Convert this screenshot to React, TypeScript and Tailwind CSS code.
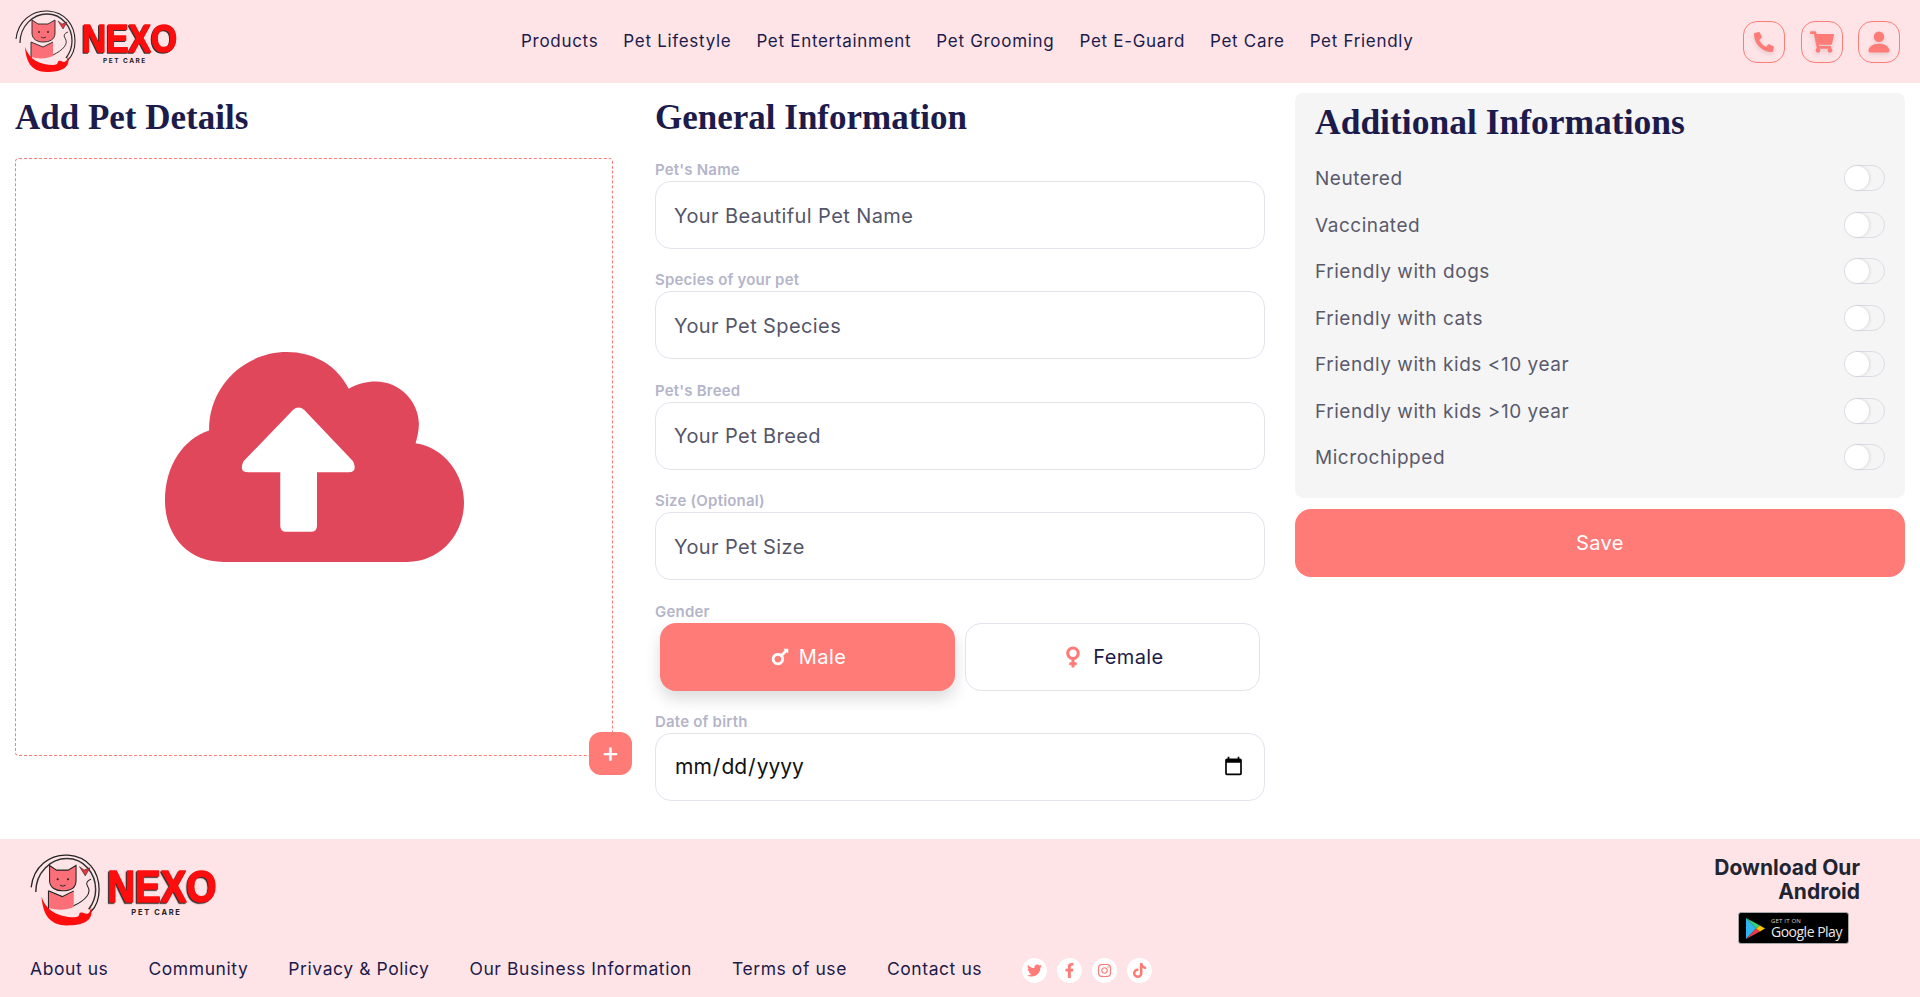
import { FaFacebookF, FaInstagram, FaMars, FaPhoneAlt, FaShoppingCart, FaTiktok, FaTwitter, FaVenus } from "react-icons/fa";
import { BsPersonFill } from "react-icons/bs";

const navLinks = ["Products", "Pet Lifestyle", "Pet Entertainment", "Pet Grooming", "Pet E-Guard", "Pet Care", "Pet Friendly"];
const footerLinks = ["About us", "Community", "Privacy & Policy", "Our Business Information", "Terms of use", "Contact us"];
const fields = [
    { label: "Pet's Name", placeholder: "Your Beautiful Pet Name" },
    { label: "Species of your pet", placeholder: "Your Pet Species" },
    { label: "Pet's Breed", placeholder: "Your Pet Breed" },
    { label: "Size (Optional)", placeholder: "Your Pet Size" },
];
const extras = [
    "Neutered",
    "Vaccinated",
    "Friendly with dogs",
    "Friendly with cats",
    "Friendly with kids <10 year",
    "Friendly with kids >10 year",
    "Microchipped",
];

function Logo({ width }: { width: number }) {
    return (
        <svg width={width} viewBox="0 0 165 64" className="block shrink-0 overflow-visible">
            {/* ring */}
            <path d="M1 29 C3 11 17 0 33 1 C50 2 60 15 60 31 C60 40 57 46 53 50" fill="none" stroke="#222" strokeWidth="1.1" />
            <path d="M5 33 C5 16 18 4 32 4 C47 4 57 17 57 31 C57 39 54 44 51 48" fill="none" stroke="#333" strokeWidth="1.3" />
            {/* cat */}
            <path d="M17 10 L23 14 L33 14 L40 10 L40 23 C40 30 34 32 28 32 C22 32 17 29 17 23 Z" fill="#fb6f78" stroke="#222" strokeWidth="0.9" />
            <circle cx="24" cy="22" r="0.9" fill="#222" />
            <circle cx="33" cy="22" r="0.9" fill="#222" />
            <path d="M26 27 Q28.500 29 31 27" fill="none" stroke="#222" strokeWidth="0.8" />
            <path d="M16 32 L16 47 C24 49 31 49 38 46 L38 32 L28 37 Z" fill="#fb6f78" />
            <path d="M16 32 L16 48 M16 32 L28 37 L38 32" fill="none" stroke="#222" strokeWidth="0.9" />
            <path d="M38 45 C48 40 54 34 50 28 C48 25 50 23 53 22" fill="none" stroke="#222" strokeWidth="0.9" />
            <path d="M43 11 L47 14 L52 12 L48 19 Z" fill="#ef3340" stroke="#222" strokeWidth="0.5" />
            {/* hand */}
            <path d="M10 37 C11 50 15 62 32 62 C46 62 56 58 53 46 C52 52 50 53 46 51 C40 50 46 55 38 55 C26 55 14 50 10 37 Z" fill="#fd0d0d" />
            {/* wordmark */}
            <text
                x="67"
                y="42"
                fontFamily="Liberation Sans, sans-serif"
                fontWeight="700"
                fontSize="38"
                fill="#fd0d0d"
                stroke="#fd0d0d"
                strokeWidth="1.5"
                strokeLinejoin="round"
                textLength="95"
                lengthAdjust="spacingAndGlyphs"
                style={{ filter: "drop-shadow(-1px 1px 0 #333)" }}
            >
                NEXO
            </text>
            <text x="88" y="53" fontFamily="Inter, sans-serif" fontWeight="700" fontSize="6.500" letterSpacing="1.500" fill="#222">PET CARE</text>
        </svg>
    );
}

function UploadCloud() {
    return (
        <svg width="299" height="210" viewBox="75 65 895 628">
            <path
                d="M250 693 C140 693 75 610 75 510 C75 405 130 325 207 300 C205 170 310 65 440 65 C520 65 590 105 625 175 C650 160 680 153 705 153 C780 153 835 215 835 280 C835 300 830 320 825 338 C910 350 970 430 970 515 C970 610 900 693 800 693 Z"
                fill="#e0475b"
            />
            <path
                d="M458 238 Q475 224 492 238 L638 392 Q652 425 625 425 L530 425 L530 585 Q530 603 512 603 L438 603 Q420 603 420 585 L420 425 L325 425 Q295 425 310 392 Z"
                fill="#fff"
            />
        </svg>
    );
}

function HeaderButton({ children }: { children: React.ReactNode }) {
    return (
        <div className="flex h-[42px] w-[42px] items-center justify-center rounded-[14px] border border-[#ff7b77] text-[#ff7b77] [&>svg]:drop-shadow-[0_2px_2px_rgba(0,0,0,0.12)]">
            {children}
        </div>
    );
}

function GooglePlayBadge() {
    return (
        <div className="flex h-[32px] w-[111px] items-center gap-[6px] rounded-[3px] border border-[#a6a6a6] bg-black pl-[7px]">
            <svg width="19" height="21" viewBox="0 0 19 21">
                <path d="M0 0 L10 10.500 L0 21 Z" fill="#2fb5f0" />
                <path d="M0 0 L14 7.500 L10 10.500 Z" fill="#35d07f" />
                <path d="M0 21 L14 13.500 L10 10.500 Z" fill="#f0394a" />
                <path d="M14 7.500 L19 10.500 L14 13.500 L10 10.500 Z" fill="#fdc500" />
            </svg>
            <div className="flex flex-col font-['Open_Sans',sans-serif] text-white">
                <span className="text-[6px] leading-[7px] tracking-[0.2px] text-[#d5d5d5]">GET IT ON</span>
                <span className="text-[14px] leading-[14px] tracking-[-0.5px] text-[#e8e8e8]">Google Play</span>
            </div>
        </div>
    );
}

export default function App() {
    return (
        <div className="min-h-[997px] bg-white font-['Inter',sans-serif] text-[#1c1b4b]">
            {/* Header */}
            <header className="flex h-[83px] items-center bg-[#ffe4e7] pl-[15px] pr-[20px]">
                <Logo width={165} />
                <nav className="ml-[341px] flex items-center gap-[25px] text-[17px] tracking-[0.7px]">
                    {navLinks.map((item) => (
                        <span key={item} className="whitespace-nowrap">{item}</span>
                    ))}
                </nav>
                <div className="ml-auto flex items-center gap-[15.500px]">
                    <HeaderButton><FaPhoneAlt size={20} /></HeaderButton>
                    <HeaderButton><FaShoppingCart size={24} /></HeaderButton>
                    <HeaderButton><BsPersonFill size={28} /></HeaderButton>
                </div>
            </header>

            <main className="grid h-[756px] grid-cols-[610px_610px_610px] gap-x-[30px] px-[15px] pt-[10px]">
                {/* Upload */}
                <section>
                    <h2 className="h-[48px] pt-[1px] font-['Liberation_Serif',serif] text-[35px] font-bold leading-[48px]">Add Pet Details</h2>
                    <div className="relative mt-[17px] flex h-[598px] w-[598px] items-center justify-center rounded-[4px] border border-dashed border-[#ff7b77]">
                        <UploadCloud />
                        <button className="absolute -bottom-[20px] -right-[20px] flex h-[43px] w-[43px] items-center justify-center rounded-[12px] bg-[#ff7b77] pb-[3px] text-[28px] leading-none text-white">
                            +
                        </button>
                    </div>
                </section>

                {/* General information */}
                <section>
                    <h2 className="mb-[17px] h-[48px] pt-[1px] font-['Liberation_Serif',serif] text-[35px] font-bold leading-[48px]">General Information</h2>
                    {fields.map((field) => (
                        <div key={field.label} className="mb-[19.400px]">
                            <label className="mb-[2px] block h-[21px] pt-[1px] text-[15px] font-semibold leading-[21px] tracking-[0.2px] text-[#b5b5c9]">{field.label}</label>
                            <input
                                placeholder={field.placeholder}
                                className="h-[68px] w-full rounded-[16px] border border-[#e3e3ee] bg-white px-[18px] pt-[1px] text-[20px] tracking-[0.4px] outline-none placeholder:text-[#55556a]"
                            />
                        </div>
                    ))}
                    <div className="mb-[19.400px]">
                        <label className="mb-[2px] block h-[21px] pt-[1px] text-[15px] font-semibold leading-[21px] tracking-[0.2px] text-[#b5b5c9]">Gender</label>
                        <div className="grid grid-cols-2 gap-[10px] px-[5px]">
                            <button className="flex h-[68px] items-center justify-center gap-[8px] rounded-[16px] bg-[#ff7b77] text-[20px] tracking-[0.4px] text-white shadow-[0_8px_16px_rgba(0,0,0,0.14)]">
                                <FaMars size={22} />
                                Male
                            </button>
                            <button className="flex h-[68px] items-center justify-center gap-[8px] rounded-[16px] border border-[#e3e3ee] bg-white text-[20px] tracking-[0.4px]">
                                <FaVenus size={24} className="text-[#ff7b77]" />
                                Female
                            </button>
                        </div>
                    </div>
                    <div>
                        <label className="mb-[2px] block h-[21px] pt-[1px] text-[15px] font-semibold leading-[21px] tracking-[0.2px] text-[#b5b5c9]">Date of birth</label>
                        <input
                            type="date"
                            className="h-[68px] w-full rounded-[16px] border border-[#e3e3ee] bg-white px-[18px] text-[21px] text-[#111] outline-none"
                        />
                    </div>
                </section>

                {/* Additional informations */}
                <section>
                    <div className="h-[405px] rounded-[8px] bg-[#f5f5f5] px-[20px] pt-[5px]">
                        <h2 className="mb-[9px] h-[48px] font-['Liberation_Serif',serif] text-[35.500px] font-bold leading-[48px]">Additional Informations</h2>
                        {extras.map((item) => (
                            <div key={item} className="flex h-[46.500px] items-center justify-between">
                                <span className="pt-[2px] text-[19px] tracking-[0.55px] text-[#5a5a6c]">{item}</span>
                                <span className="flex h-[26px] w-[41px] items-center rounded-full border border-[#dcdce8]">
                                    <span className="h-[24px] w-[24px] rounded-full bg-white shadow-[1px_0_3px_rgba(0,0,0,0.12)]" />
                                </span>
                            </div>
                        ))}
                    </div>
                    <button className="mt-[11px] h-[68px] w-full rounded-[16px] bg-[#ff7b77] text-[20px] tracking-[0.4px] text-white">Save</button>
                </section>
            </main>

            {/* Footer */}
            <footer className="flex h-[158px] justify-between bg-[#ffe4e7] pl-[30px] pr-[60px]">
                <div className="pt-[15px]">
                    <Logo width={190} />
                    <div className="mt-[28px] flex items-center">
                        <div className="flex gap-[40px] text-[17.500px] tracking-[0.57px]">
                            {footerLinks.map((item) => (
                                <span key={item} className="whitespace-nowrap">{item}</span>
                            ))}
                        </div>
                        <div className="ml-[40px] mt-[2px] flex gap-[10px] text-[#ff7b77]">
                            {[FaTwitter, FaFacebookF, FaInstagram, FaTiktok].map((Icon, i) => (
                                <span key={i} className="flex h-[25px] w-[25px] items-center justify-center rounded-full bg-white">
                                    <Icon size={15} />
                                </span>
                            ))}
                        </div>
                    </div>
                </div>
                <div className="flex flex-col items-end pt-[17px]">
                    <p className="text-right text-[21px] font-bold leading-[24px] text-[#1f2433]">
                        Download Our
                        <br />
                        Android
                    </p>
                    <div className="mr-[11px] mt-[8px]">
                        <GooglePlayBadge />
                    </div>
                </div>
            </footer>
        </div>
    );
}
